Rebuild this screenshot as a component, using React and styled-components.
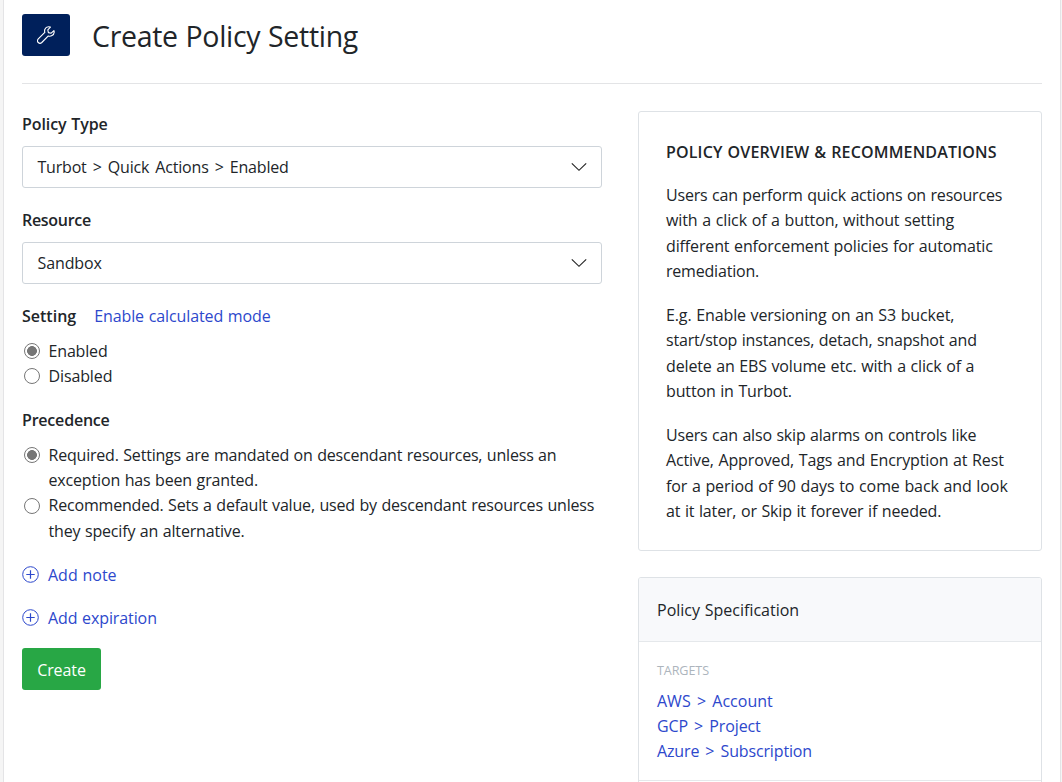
import React from 'react';
import styled, { createGlobalStyle } from 'styled-components';

const Global = createGlobalStyle`
  *, *::before, *::after { box-sizing: border-box; }
  body {
    margin: 0;
    background: #f5f5f5;
    color: #212529;
    font-family: "Open Sans", "Noto Sans", sans-serif;
    font-size: 16px;
    line-height: 25.2px;
    overflow: hidden;
  }
  p { margin: 0; }
`;

const Page = styled.main`
  height: 782px;
  margin: 0 1px 0 3px;
  padding: 14px 18px 0;
  background: #fff;
  border: solid #e4e4e6;
  border-width: 0 1px;
  overflow: hidden;
`;

const Header = styled.header`
  display: flex;
  align-items: flex-start;
  gap: 22px;
  height: 70px;
  border-bottom: 1px solid #e3e4e6;
`;

const IconTile = styled.div`
  display: flex;
  align-items: center;
  justify-content: center;
  width: 48px;
  height: 42px;
  padding-bottom: 1px;
  border-radius: 3px;
  background: #00205b;
`;

const Title = styled.h1`
  margin: 0;
  font-size: 28.5px;
  font-weight: 400;
  line-height: 44px;
  white-space: nowrap;
`;

const Columns = styled.div`
  display: grid;
  grid-template-columns: 580px 404px;
  column-gap: 36px;
  padding-top: 27px;
`;

const Field = styled.section`
  display: flex;
  flex-direction: column;
  margin-bottom: ${(p) => p.$after}px;
`;

const FieldHead = styled.div`
  display: flex;
  gap: 18px;
  height: 26px;
  padding-top: 1px;
  margin-bottom: ${(p) => p.$after}px;
`;

const Label = styled.span`
  font-weight: 600;
`;

const Text = styled.span`
  display: ${(p) => (p.$line ? 'block' : 'inline-block')};
  padding-top: ${(p) => p.$drop || 0}px;
  letter-spacing: ${(p) => p.$track || 0}px;
  word-spacing: ${(p) => p.$gap ?? 0.6}px;
  white-space: nowrap;
`;

const Select = styled.button`
  display: flex;
  align-items: center;
  justify-content: space-between;
  height: 42px;
  padding: 0 14px 0 14.5px;
  font: inherit;
  color: inherit;
  background: #fff;
  border: 1px solid #ced4da;
  border-radius: 3px;
`;

const Option = styled.label`
  display: flex;
  align-items: flex-start;
  gap: 8.5px;
  padding-left: 2px;
`;

const Radio = styled.input`
  appearance: none;
  width: 16px;
  height: 16px;
  margin: 4.2px 0 0;
  border: 1px solid #767676;
  border-radius: 50%;
  background: ${(p) => (p.defaultChecked ? 'radial-gradient(circle, #767676 4.6px, #fff 5.2px)' : '#fff')};
`;

const Link = styled.a`
  color: #2d48cc;
`;

const AddLink = styled(Link)`
  display: flex;
  align-items: center;
  gap: 9px;
  height: 25px;
  margin-bottom: 18px;
`;

const CreateButton = styled.button`
  display: block;
  width: 79px;
  height: 42px;
  padding: 0;
  border: 0;
  border-radius: 3px;
  background: #28a745;
  color: #fff;
  font: inherit;
`;

const Side = styled.aside`
  display: flex;
  flex-direction: column;
  gap: 26px;
`;

const Card = styled.section`
  height: ${(p) => p.$height}px;
  border: 1px solid #dee2e6;
  border-radius: 3px;
  overflow: hidden;
`;

const Overview = styled.div`
  padding: 28px 27px 0;
  p { margin-top: 17.95px; }
  p + p { margin-top: 19.2px; }
`;

const OverviewTitle = styled.h2`
  margin: 0;
  font-size: 16px;
  line-height: 25.2px;
  font-weight: 600;
`;

const CardHeader = styled.div`
  height: 64px;
  padding: 20px 18px 0;
  background: #f8f9fb;
  border-bottom: 1px solid #e5e8eb;
`;

const Targets = styled.div`
  height: 139px;
  padding: 18px 18px 0;
  border-bottom: 1px solid #e5e8eb;
`;

const Caption = styled.div`
  height: 29px;
  font-size: 12.6px;
  line-height: 22px;
  color: #adb5bd;
`;

const Chevron = () => (
  <svg width="16" height="10" viewBox="0 0 16 10" fill="none" stroke="#222" strokeWidth="1.15">
    <path d="M.8 1.3 8 8.3 15.2 1.3" />
  </svg>
);

const PlusCircle = () => (
  <svg width="17" height="17" viewBox="0 0 17 17" fill="none" stroke="currentColor">
    <circle cx="8.5" cy="8.5" r="7.8" />
    <path d="M8.5 4.3v8.4M4.3 8.5h8.4" strokeWidth="1.2" />
  </svg>
);

const WrenchIcon = () => (
  <svg width="18" height="18" viewBox="0 0 24 24" fill="none" stroke="#fff" strokeWidth="1.5" strokeLinejoin="round">
    <path d="M22.6 6.2 18.9 9.6 15.2 8.8 14.4 5.1 17.9 1.4C14.8.5 11.6 1.8 10.5 4.4c-.5 1.4-.5 2.7-.1 4.2L1.7 17.3c-1.3 1.4-1.3 3.4 0 4.7s3.3 1.3 4.7 0l8.7-8.7c1.5.5 3 .4 4.3-.2 2.7-1.2 4-4 3.2-6.9z" />
  </svg>
);

const paragraphs = [
  [
    ['Users can perform quick actions on resources', -0.2],
    ['with a click of a button, without setting', -0.1],
    ['different enforcement policies for automatic', -0.13],
    ['remediation.', -0.2],
  ],
  [
    ['E.g. Enable versioning on an S3 bucket,', -0.11],
    ['start/stop instances, detach, snapshot and', -0.19],
    ['delete an EBS volume etc. with a click of a', -0.14],
    ['button in Turbot.', -0.14],
  ],
  [
    ['Users can also skip alarms on controls like', -0.19],
    ['Active, Approved, Tags and Encryption at Rest', -0.12],
    ['for a period of 90 days to come back and look', -0.09],
    ['at it later, or Skip it forever if needed.', -0.15],
  ],
];

const targets = [
  ['AWS > Account', 0],
  ['GCP > Project', -0.12],
  ['Azure > Subscription', -0.14],
];

function Lines({ lines }) {
  return lines.map(([text, track]) => (
    <Text key={text} $line $track={track}>{text}</Text>
  ));
}

function Choice({ name, checked, lines }) {
  return (
    <Option>
      <Radio type="radio" name={name} defaultChecked={checked} />
      <span><Lines lines={lines} /></span>
    </Option>
  );
}

export default function App() {
  return (
    <>
      <Global />
      <Page>
        <Header>
          <IconTile><WrenchIcon /></IconTile>
          <Title><Text $track={-0.3}>Create Policy Setting</Text></Title>
        </Header>
        <Columns>
          <div>
            <Field $after={19}>
              <FieldHead $after={9}><Label><Text $track={-0.08}>Policy Type</Text></Label></FieldHead>
              <Select><Text $drop={2} $track={-0.2} $gap={2.2}>{'Turbot > Quick Actions > Enabled'}</Text><Chevron /></Select>
            </Field>
            <Field $after={19}>
              <FieldHead $after={9}><Label><Text $track={-0.3}>Resource</Text></Label></FieldHead>
              <Select><Text $drop={2} $track={-0.1}>Sandbox</Text><Chevron /></Select>
            </Field>
            <Field $after={17.8}>
              <FieldHead $after={9.8}>
                <Label><Text>Setting</Text></Label>
                <Link><Text $track={-0.1}>Enable calculated mode</Text></Link>
              </FieldHead>
              <Choice name="setting" checked lines={[['Enabled', -0.16]]} />
              <Choice name="setting" lines={[['Disabled', -0.12]]} />
            </Field>
            <Field $after={18}>
              <FieldHead $after={10}><Label><Text $track={-0.2}>Precedence</Text></Label></FieldHead>
              <Choice
                name="precedence"
                checked
                lines={[
                  ['Required. Settings are mandated on descendant resources, unless an', -0.2],
                  ['exception has been granted.', -0.16],
                ]}
              />
              <Choice
                name="precedence"
                lines={[
                  ['Recommended. Sets a default value, used by descendant resources unless', -0.19],
                  ['they specify an alternative.', -0.17],
                ]}
              />
            </Field>
            <AddLink><PlusCircle /><Text $drop={2}>Add note</Text></AddLink>
            <AddLink><PlusCircle /><Text $drop={2} $track={-0.1}>Add expiration</Text></AddLink>
            <CreateButton><Text $drop={4} $track={-0.1}>Create</Text></CreateButton>
          </div>
          <Side>
            <Card $height={440}>
              <Overview>
                <OverviewTitle><Text $track={0.16}>POLICY OVERVIEW &amp; RECOMMENDATIONS</Text></OverviewTitle>
                {paragraphs.map((lines) => (
                  <p key={lines[0][0]}><Lines lines={lines} /></p>
                ))}
              </Overview>
            </Card>
            <Card $height={260}>
              <CardHeader><Text>Policy Specification</Text></CardHeader>
              <Targets>
                <Caption><Text $track={-0.1}>TARGETS</Text></Caption>
                {targets.map(([text, track]) => (
                  <Link key={text}><Text $line $track={track} $gap={2.1}>{text}</Text></Link>
                ))}
              </Targets>
            </Card>
          </Side>
        </Columns>
      </Page>
    </>
  );
}
